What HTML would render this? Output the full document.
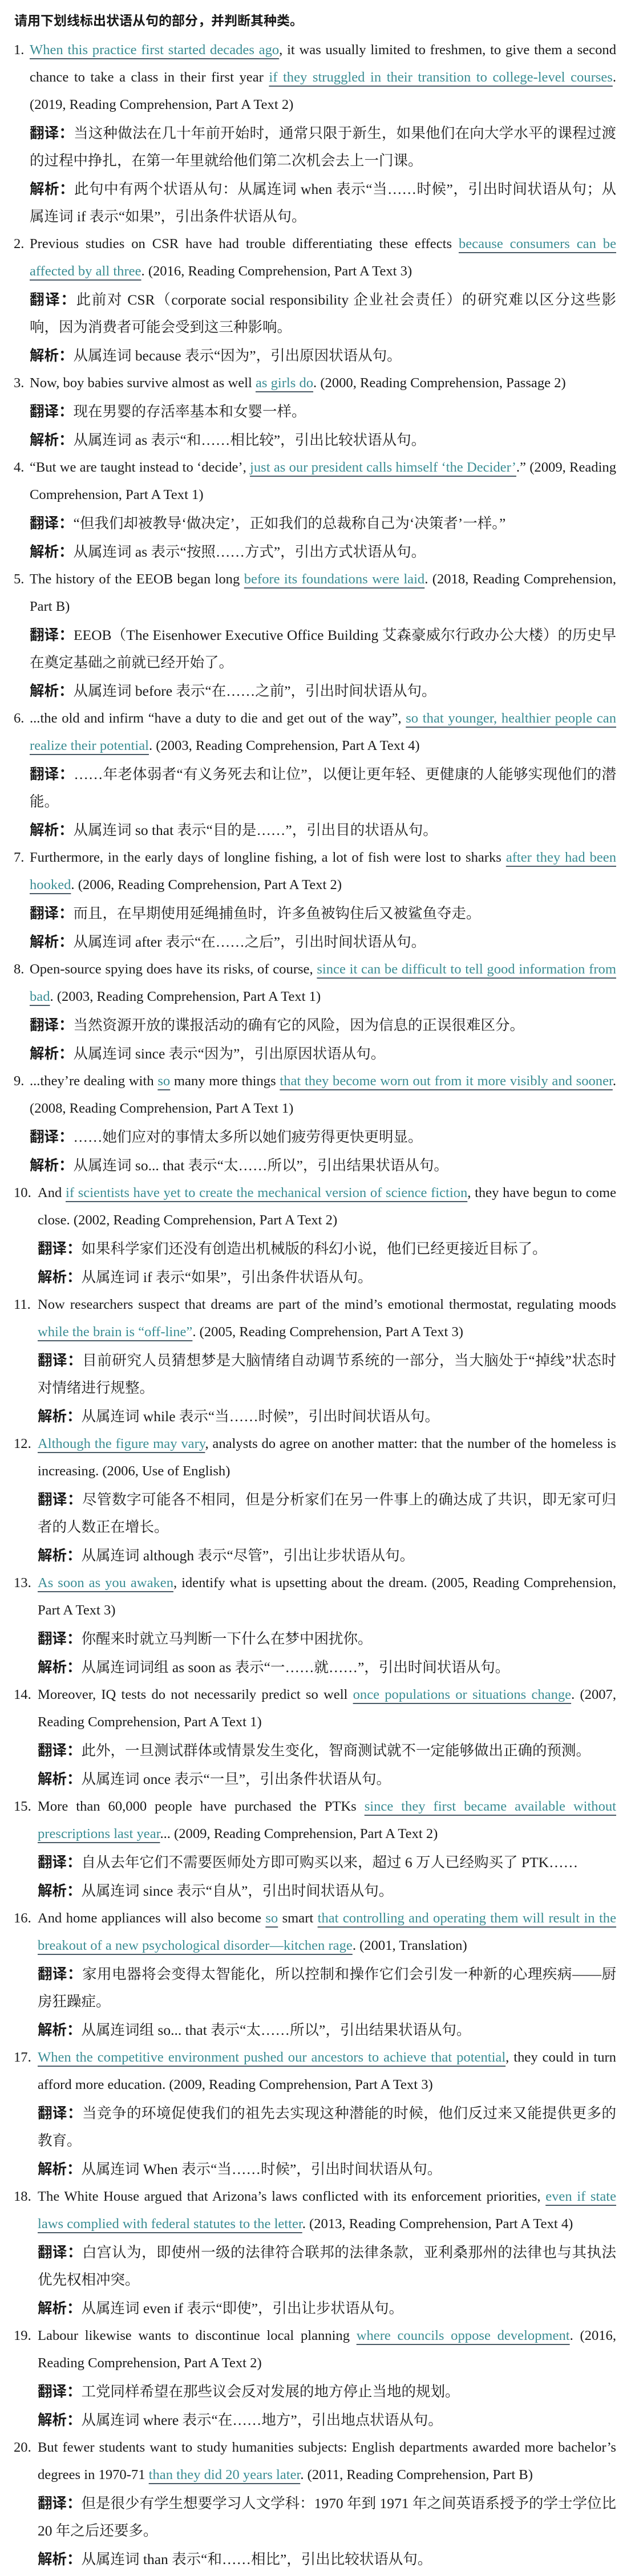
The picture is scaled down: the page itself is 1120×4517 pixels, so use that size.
<!DOCTYPE html>
<html><head><meta charset="utf-8">
<style>
body{margin:0;background:#fff;width:1120px;height:4517px;overflow:hidden;}
.wrap{padding:12px 40px 0 20px;font-family:"Liberation Serif","Noto Serif CJK SC",serif;font-size:24.6px;color:#1a1a1a;line-height:48px;}
h1{font-family:"Liberation Sans","Noto Sans CJK SC",sans-serif;font-weight:bold;font-size:23px;margin:0 0 4px 5px;line-height:48px;}
.it{position:relative;padding-left:32px;text-align:justify;}
.it.d2{padding-left:46px;}
.n{position:absolute;left:4px;top:0;}
p{margin:0;}
u{color:#3b8d94;text-decoration:underline;text-decoration-color:#4a5a66;text-decoration-thickness:2px;text-underline-offset:7px;}
b{font-family:"Noto Sans CJK SC",sans-serif;font-weight:bold;}
.zh{font-family:"Liberation Serif","Noto Serif CJK SC",serif;font-size:25.5px;}
</style></head><body><div class="wrap">
<h1>请用下划线标出状语从句的部分，并判断其种类。</h1>

<div class="it"><span class="n">1.</span><p><u>When this practice first started decades ago</u>, it was usually limited to freshmen, to give them a second chance to take a class in their first year <u>if they struggled in their transition to college-level courses</u>. (2019, Reading Comprehension, Part A Text 2)</p>
<p class="zh"><b>翻译：</b>当这种做法在几十年前开始时，通常只限于新生，如果他们在向大学水平的课程过渡的过程中挣扎，在第一年里就给他们第二次机会去上一门课。</p>
<p class="zh"><b>解析：</b>此句中有两个状语从句：从属连词 when 表示“当……时候”，引出时间状语从句；从属连词 if 表示“如果”，引出条件状语从句。</p></div>

<div class="it"><span class="n">2.</span><p>Previous studies on CSR have had trouble differentiating these effects <u>because consumers can be affected by all three</u>. (2016, Reading Comprehension, Part A Text 3)</p>
<p class="zh"><b>翻译：</b>此前对 CSR（corporate social responsibility 企业社会责任）的研究难以区分这些影响，因为消费者可能会受到这三种影响。</p>
<p class="zh"><b>解析：</b>从属连词 because 表示“因为”，引出原因状语从句。</p></div>

<div class="it"><span class="n">3.</span><p>Now, boy babies survive almost as well <u>as girls do</u>. (2000, Reading Comprehension, Passage 2)</p>
<p class="zh"><b>翻译：</b>现在男婴的存活率基本和女婴一样。</p>
<p class="zh"><b>解析：</b>从属连词 as 表示“和……相比较”，引出比较状语从句。</p></div>

<div class="it"><span class="n">4.</span><p>“But we are taught instead to ‘decide’, <u>just as our president calls himself ‘the Decider’</u>.” (2009, Reading Comprehension, Part A Text 1)</p>
<p class="zh"><b>翻译：</b>“但我们却被教导‘做决定’，正如我们的总裁称自己为‘决策者’一样。”</p>
<p class="zh"><b>解析：</b>从属连词 as 表示“按照……方式”，引出方式状语从句。</p></div>

<div class="it"><span class="n">5.</span><p>The history of the EEOB began long <u>before its foundations were laid</u>. (2018, Reading Comprehension, Part B)</p>
<p class="zh"><b>翻译：</b>EEOB（The Eisenhower Executive Office Building 艾森豪威尔行政办公大楼）的历史早在奠定基础之前就已经开始了。</p>
<p class="zh"><b>解析：</b>从属连词 before 表示“在……之前”，引出时间状语从句。</p></div>

<div class="it"><span class="n">6.</span><p>...the old and infirm “have a duty to die and get out of the way”, <u>so that younger, healthier people can realize their potential</u>. (2003, Reading Comprehension, Part A Text 4)</p>
<p class="zh"><b>翻译：</b>……年老体弱者“有义务死去和让位”，以便让更年轻、更健康的人能够实现他们的潜能。</p>
<p class="zh"><b>解析：</b>从属连词 so that 表示“目的是……”，引出目的状语从句。</p></div>

<div class="it"><span class="n">7.</span><p>Furthermore, in the early days of longline fishing, a lot of fish were lost to sharks <u>after they had been hooked</u>. (2006, Reading Comprehension, Part A Text 2)</p>
<p class="zh"><b>翻译：</b>而且，在早期使用延绳捕鱼时，许多鱼被钩住后又被鲨鱼夺走。</p>
<p class="zh"><b>解析：</b>从属连词 after 表示“在……之后”，引出时间状语从句。</p></div>

<div class="it"><span class="n">8.</span><p>Open-source spying does have its risks, of course, <u>since it can be difficult to tell good information from bad</u>. (2003, Reading Comprehension, Part A Text 1)</p>
<p class="zh"><b>翻译：</b>当然资源开放的谍报活动的确有它的风险，因为信息的正误很难区分。</p>
<p class="zh"><b>解析：</b>从属连词 since 表示“因为”，引出原因状语从句。</p></div>

<div class="it"><span class="n">9.</span><p>...they’re dealing with <u>so</u> many more things <u>that they become worn out from it more visibly and sooner</u>. (2008, Reading Comprehension, Part A Text 1)</p>
<p class="zh"><b>翻译：</b>……她们应对的事情太多所以她们疲劳得更快更明显。</p>
<p class="zh"><b>解析：</b>从属连词 so... that 表示“太……所以”，引出结果状语从句。</p></div>

<div class="it d2"><span class="n">10.</span><p>And <u>if scientists have yet to create the mechanical version of science fiction</u>, they have begun to come close. (2002, Reading Comprehension, Part A Text 2)</p>
<p class="zh"><b>翻译：</b>如果科学家们还没有创造出机械版的科幻小说，他们已经更接近目标了。</p>
<p class="zh"><b>解析：</b>从属连词 if 表示“如果”，引出条件状语从句。</p></div>

<div class="it d2"><span class="n">11.</span><p>Now researchers suspect that dreams are part of the mind’s emotional thermostat, regulating moods <u>while the brain is “off-line”</u>. (2005, Reading Comprehension, Part A Text 3)</p>
<p class="zh"><b>翻译：</b>目前研究人员猜想梦是大脑情绪自动调节系统的一部分，当大脑处于“掉线”状态时对情绪进行规整。</p>
<p class="zh"><b>解析：</b>从属连词 while 表示“当……时候”，引出时间状语从句。</p></div>

<div class="it d2"><span class="n">12.</span><p><u>Although the figure may vary</u>, analysts do agree on another matter: that the number of the homeless is increasing. (2006, Use of English)</p>
<p class="zh"><b>翻译：</b>尽管数字可能各不相同，但是分析家们在另一件事上的确达成了共识，即无家可归者的人数正在增长。</p>
<p class="zh"><b>解析：</b>从属连词 although 表示“尽管”，引出让步状语从句。</p></div>

<div class="it d2"><span class="n">13.</span><p><u>As soon as you awaken</u>, identify what is upsetting about the dream. (2005, Reading Comprehension, Part A Text 3)</p>
<p class="zh"><b>翻译：</b>你醒来时就立马判断一下什么在梦中困扰你。</p>
<p class="zh"><b>解析：</b>从属连词词组 as soon as 表示“一……就……”，引出时间状语从句。</p></div>

<div class="it d2"><span class="n">14.</span><p>Moreover, IQ tests do not necessarily predict so well <u>once populations or situations change</u>. (2007, Reading Comprehension, Part A Text 1)</p>
<p class="zh"><b>翻译：</b>此外，一旦测试群体或情景发生变化，智商测试就不一定能够做出正确的预测。</p>
<p class="zh"><b>解析：</b>从属连词 once 表示“一旦”，引出条件状语从句。</p></div>

<div class="it d2"><span class="n">15.</span><p>More than 60,000 people have purchased the PTKs <u>since they first became available without prescriptions last year</u>... (2009, Reading Comprehension, Part A Text 2)</p>
<p class="zh"><b>翻译：</b>自从去年它们不需要医师处方即可购买以来，超过 6 万人已经购买了 PTK……</p>
<p class="zh"><b>解析：</b>从属连词 since 表示“自从”，引出时间状语从句。</p></div>

<div class="it d2"><span class="n">16.</span><p>And home appliances will also become <u>so</u> smart <u>that controlling and operating them will result in the breakout of a new psychological disorder—kitchen rage</u>. (2001, Translation)</p>
<p class="zh"><b>翻译：</b>家用电器将会变得太智能化，所以控制和操作它们会引发一种新的心理疾病——厨房狂躁症。</p>
<p class="zh"><b>解析：</b>从属连词组 so... that 表示“太……所以”，引出结果状语从句。</p></div>

<div class="it d2"><span class="n">17.</span><p><u>When the competitive environment pushed our ancestors to achieve that potential</u>, they could in turn afford more education. (2009, Reading Comprehension, Part A Text 3)</p>
<p class="zh"><b>翻译：</b>当竞争的环境促使我们的祖先去实现这种潜能的时候，他们反过来又能提供更多的教育。</p>
<p class="zh"><b>解析：</b>从属连词 When 表示“当……时候”，引出时间状语从句。</p></div>

<div class="it d2"><span class="n">18.</span><p>The White House argued that Arizona’s laws conflicted with its enforcement priorities, <u>even if state laws complied with federal statutes to the letter</u>. (2013, Reading Comprehension, Part A Text 4)</p>
<p class="zh"><b>翻译：</b>白宫认为，即使州一级的法律符合联邦的法律条款，亚利桑那州的法律也与其执法优先权相冲突。</p>
<p class="zh"><b>解析：</b>从属连词 even if 表示“即使”，引出让步状语从句。</p></div>

<div class="it d2"><span class="n">19.</span><p>Labour likewise wants to discontinue local planning <u>where councils oppose development</u>. (2016, Reading Comprehension, Part A Text 2)</p>
<p class="zh"><b>翻译：</b>工党同样希望在那些议会反对发展的地方停止当地的规划。</p>
<p class="zh"><b>解析：</b>从属连词 where 表示“在……地方”，引出地点状语从句。</p></div>

<div class="it d2"><span class="n">20.</span><p>But fewer students want to study humanities subjects: English departments awarded more bachelor’s degrees in 1970-71 <u>than they did 20 years later</u>. (2011, Reading Comprehension, Part B)</p>
<p class="zh"><b>翻译：</b>但是很少有学生想要学习人文学科：1970 年到 1971 年之间英语系授予的学士学位比 20 年之后还要多。</p>
<p class="zh"><b>解析：</b>从属连词 than 表示“和……相比”，引出比较状语从句。</p></div>
</div></body></html>
